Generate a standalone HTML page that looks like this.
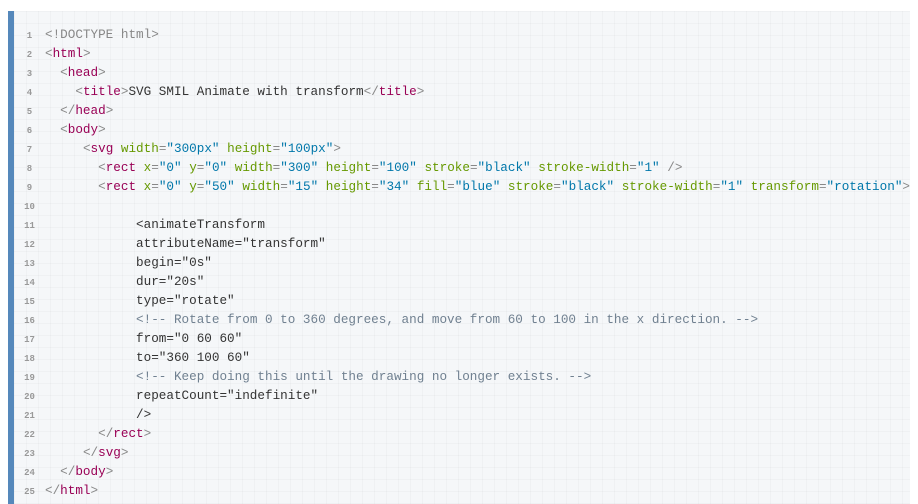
<!DOCTYPE html>
<html><head><style>
html,body{margin:0;padding:0;background:#fff;width:918px;height:504px;overflow:hidden}
.panel{position:absolute;left:8px;top:11px;width:902px;height:493px;overflow:hidden;
background-color:#f5f7f9;border-left:6px solid #5588bb;box-sizing:border-box;
background-image:linear-gradient(rgba(0,0,0,0.025) 1px,transparent 1px),linear-gradient(90deg,rgba(0,0,0,0.025) 1px,transparent 1px);
background-size:12px 12px}
.code{position:absolute;left:0;top:14px;font-family:"Liberation Mono",monospace;font-size:12.65px;line-height:19px;white-space:normal;color:#333}
.ln{display:inline-block;width:31px;text-align:center;font-size:9px;color:#999;font-weight:bold}
.l{display:block;height:19px;white-space:pre}
.t{color:#905}.p{color:#888}.a{color:#690}.v{color:#07a}.c{color:#708090}
</style></head><body><div class="panel"><div class="code">
<span class="l"><span class="ln">1</span><span class="p">&lt;!DOCTYPE html&gt;</span></span>
<span class="l"><span class="ln">2</span><span class="p">&lt;</span><span class="t">html</span><span class="p">&gt;</span></span>
<span class="l"><span class="ln">3</span>  <span class="p">&lt;</span><span class="t">head</span><span class="p">&gt;</span></span>
<span class="l"><span class="ln">4</span>    <span class="p">&lt;</span><span class="t">title</span><span class="p">&gt;</span>SVG SMIL Animate with transform<span class="p">&lt;/</span><span class="t">title</span><span class="p">&gt;</span></span>
<span class="l"><span class="ln">5</span>  <span class="p">&lt;/</span><span class="t">head</span><span class="p">&gt;</span></span>
<span class="l"><span class="ln">6</span>  <span class="p">&lt;</span><span class="t">body</span><span class="p">&gt;</span></span>
<span class="l"><span class="ln">7</span>     <span class="p">&lt;</span><span class="t">svg</span> <span class="a">width</span><span class="p">=</span><span class="v">"300px"</span> <span class="a">height</span><span class="p">=</span><span class="v">"100px"</span><span class="p">&gt;</span></span>
<span class="l"><span class="ln">8</span>       <span class="p">&lt;</span><span class="t">rect</span> <span class="a">x</span><span class="p">=</span><span class="v">"0"</span> <span class="a">y</span><span class="p">=</span><span class="v">"0"</span> <span class="a">width</span><span class="p">=</span><span class="v">"300"</span> <span class="a">height</span><span class="p">=</span><span class="v">"100"</span> <span class="a">stroke</span><span class="p">=</span><span class="v">"black"</span> <span class="a">stroke-width</span><span class="p">=</span><span class="v">"1"</span> <span class="p">/&gt;</span></span>
<span class="l"><span class="ln">9</span>       <span class="p">&lt;</span><span class="t">rect</span> <span class="a">x</span><span class="p">=</span><span class="v">"0"</span> <span class="a">y</span><span class="p">=</span><span class="v">"50"</span> <span class="a">width</span><span class="p">=</span><span class="v">"15"</span> <span class="a">height</span><span class="p">=</span><span class="v">"34"</span> <span class="a">fill</span><span class="p">=</span><span class="v">"blue"</span> <span class="a">stroke</span><span class="p">=</span><span class="v">"black"</span> <span class="a">stroke-width</span><span class="p">=</span><span class="v">"1"</span> <span class="a">transform</span><span class="p">=</span><span class="v">"rotation"</span><span class="p">&gt;</span></span>
<span class="l"><span class="ln">10</span></span>
<span class="l"><span class="ln">11</span>            &lt;animateTransform</span>
<span class="l"><span class="ln">12</span>            attributeName="transform"</span>
<span class="l"><span class="ln">13</span>            begin="0s"</span>
<span class="l"><span class="ln">14</span>            dur="20s"</span>
<span class="l"><span class="ln">15</span>            type="rotate"</span>
<span class="l"><span class="ln">16</span>            <span class="c">&lt;!-- Rotate from 0 to 360 degrees, and move from 60 to 100 in the x direction. --&gt;</span></span>
<span class="l"><span class="ln">17</span>            from="0 60 60"</span>
<span class="l"><span class="ln">18</span>            to="360 100 60"</span>
<span class="l"><span class="ln">19</span>            <span class="c">&lt;!-- Keep doing this until the drawing no longer exists. --&gt;</span></span>
<span class="l"><span class="ln">20</span>            repeatCount="indefinite"</span>
<span class="l"><span class="ln">21</span>            /&gt;</span>
<span class="l"><span class="ln">22</span>       <span class="p">&lt;/</span><span class="t">rect</span><span class="p">&gt;</span></span>
<span class="l"><span class="ln">23</span>     <span class="p">&lt;/</span><span class="t">svg</span><span class="p">&gt;</span></span>
<span class="l"><span class="ln">24</span>  <span class="p">&lt;/</span><span class="t">body</span><span class="p">&gt;</span></span>
<span class="l"><span class="ln">25</span><span class="p">&lt;/</span><span class="t">html</span><span class="p">&gt;</span></span>
</div></div></body></html>
